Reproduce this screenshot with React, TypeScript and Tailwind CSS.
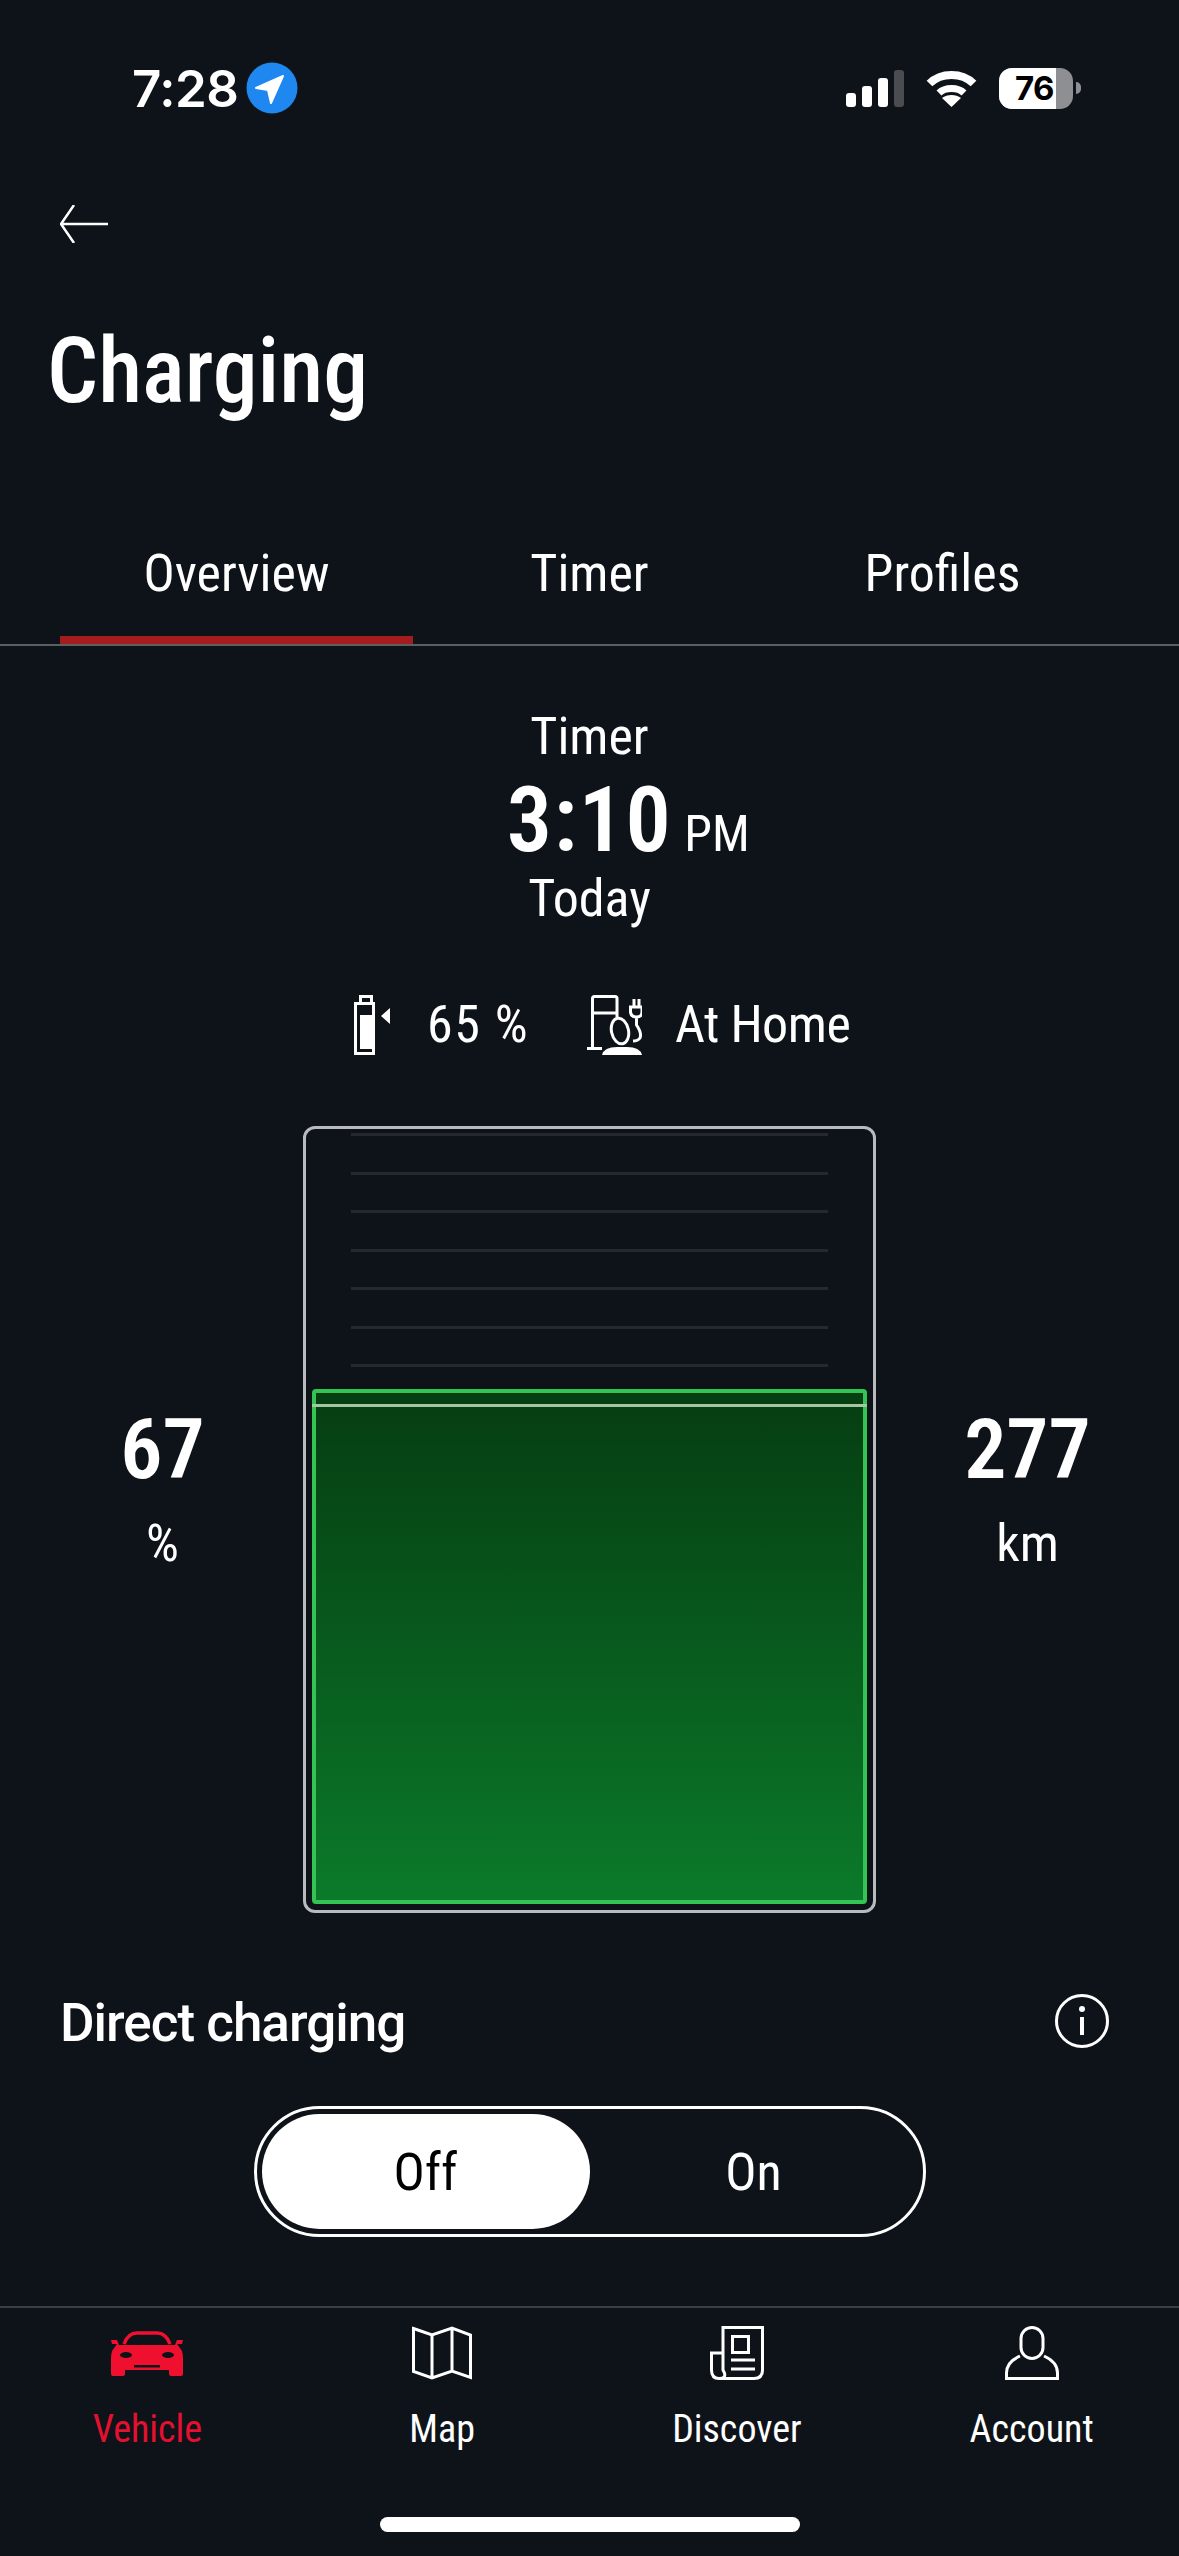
import React from "react";

const StatusBar = () => (
  <div className="h-[176px] shrink-0 flex items-center font-['Inter',sans-serif] text-white [font-stretch:100%]">
    <span className="ml-[132px] w-[114px] text-[51px] font-semibold leading-none tracking-[-0.5px]">7:28</span>
    <svg width="52" height="52" viewBox="0 0 52 52" className="shrink-0">
      <circle cx="26" cy="26" r="25.5" fill="#1e88f0" />
      <path d="M10 26 37 14 25 41 22 28Z" fill="#fff" stroke="#fff" strokeWidth="2" strokeLinejoin="round" />
    </svg>
    <div className="ml-[548px] flex items-end gap-[6px] h-[38px]">
      <div className="w-[10px] h-[14px] rounded-[3px] bg-white" />
      <div className="w-[10px] h-[21px] rounded-[3px] bg-white" />
      <div className="w-[10px] h-[29px] rounded-[3px] bg-white" />
      <div className="w-[10px] h-[37px] rounded-[3px] bg-[#4a4c50]" />
    </div>
    <svg width="51" height="38" viewBox="0 0 51 38" className="ml-[22px] shrink-0">
      <path d="M3.5 14.5C15 3 36 3 47.5 14.5" fill="none" stroke="#fff" strokeWidth="8" />
      <path d="M13 24C19 18 32 18 38 24" fill="none" stroke="#fff" strokeWidth="7" />
      <path d="M25.5 38 16 29C21 25 30 25 35 29Z" fill="#fff" />
    </svg>
    <div className="ml-[22px] w-[74px] h-[41px] rounded-[13px] overflow-hidden flex bg-[#8e8f92] shrink-0">
      <div className="w-[57px] bg-white text-black text-[33px] font-bold leading-[41px] text-right pr-[2px] tracking-[-0.5px]">76</div>
    </div>
    <div className="ml-[3px] w-[5px] h-[12px] rounded-r-full bg-[#8e8f92]" />
  </div>
);

const Tab = ({ label, active }: { label: string; active?: boolean }) => (
  <div className="relative w-[353px] h-[140px] flex items-center justify-center text-[52px]">
    {label}
    {active && <div className="absolute left-0 right-0 bottom-0 h-[8px] bg-[#a51c1f]" />}
  </div>
);

const BatteryIcon = () => (
  <svg width="36" height="60" viewBox="0 0 36 60" className="shrink-0">
    <path d="M1.5 8.5H19.5V58.5H1.5ZM6.5 8V1.5H17.5V8" fill="none" stroke="#fff" strokeWidth="3" />
    <rect x="6" y="20" width="12" height="34" fill="#fff" />
    <path d="M27 21 36 13V29Z" fill="#fff" />
  </svg>
);

const StationIcon = () => (
  <svg width="55" height="60" viewBox="0 0 55 60" className="shrink-0" fill="none" stroke="#fff" strokeWidth="3">
    <path d="M0 53.5H15M5.5 53V3.5Q5.5 1.5 7.5 1.5H28Q30 1.5 30 3.5V22M5 18H30" />
    <ellipse cx="33" cy="36" rx="8.5" ry="13" transform="rotate(-12 33 36)" />
    <path d="M15 60Q17 52 30 52H40Q53 52 55 60Z" fill="#fff" stroke="none" />
    <path d="M47 4V12M52 4V12M43.5 12H55V17Q55 22 49.5 22Q44 22 43.5 17ZM49.5 22V30Q55 38 53 43Q51 46 46 46" />
  </svg>
);

const CarIcon = () => (
  <svg width="72" height="45" viewBox="0 0 72 45" fill="#ef1030">
    <path d="M13 13Q17 2 26 2H46Q55 2 59 13" fill="none" stroke="#ef1030" strokeWidth="3.5" />
    <path d="M0 9H6L8 14H64L66 9H72L71 13H66L71 20Q72 24 72 27V43Q72 45 70 45H60Q58 45 58 43V39H14V43Q14 45 12 45H2Q0 45 0 43V27Q0 24 1 20L6 13H1Z" />
    <ellipse cx="15" cy="24" rx="6" ry="3" fill="#0e1319" />
    <ellipse cx="57" cy="24" rx="6" ry="3" fill="#0e1319" />
    <rect x="23" y="34" width="26" height="2.5" fill="#0e1319" />
  </svg>
);

const MapIcon = () => (
  <svg width="60" height="54" viewBox="0 0 60 54" fill="none" stroke="#fff" strokeWidth="3">
    <path d="M1.5 2.5 20 9 40 2 58.5 9V51.5L40 45 20 52 1.5 45.5ZM20 9V52M40 2V45" />
  </svg>
);

const DiscoverIcon = () => (
  <svg width="54" height="54" viewBox="0 0 54 54" fill="none" stroke="#fff" strokeWidth="3">
    <path d="M13 27V1.5H52.5V44Q52.5 52.5 44 52.5H9M13 27H1.5V44Q1.5 52.5 9 52.5Q18 52.5 13 44V27" />
    <rect x="22.5" y="10.5" width="16" height="16" />
    <path d="M21 34H45M21 43H45" />
  </svg>
);

const AccountIcon = () => (
  <svg width="54" height="54" viewBox="0 0 54 54" fill="none" stroke="#fff" strokeWidth="3">
    <rect x="16" y="1.5" width="22" height="31" rx="11" />
    <path d="M15 30Q1.5 36 1.5 47V52.5H52.5V47Q52.5 36 39 30" />
  </svg>
);

const NavItem = ({ label, icon, active }: { label: string; icon: React.ReactNode; active?: boolean }) => (
  <div className="flex flex-col items-center">
    <div className="h-[54px] flex items-center">{icon}</div>
    <div className={`mt-[24px] h-[50px] leading-[50px] text-[38px] ${active ? "text-[#e3112f]" : "text-white"}`}>
      {label}
    </div>
  </div>
);

export default function App() {
  return (
    <div className="w-[1179px] h-[2556px] overflow-hidden flex flex-col bg-[#0e1319] text-white font-['Roboto',sans-serif] [font-stretch:85%]">
      <StatusBar />

      <div className="h-[96px] shrink-0 flex items-center pl-[60px]">
        <svg width="48" height="38" viewBox="0 0 48 38" fill="none" stroke="#fff" strokeWidth="2.5">
          <path d="M48 19H1M14 0 1 19 14 38" />
        </svg>
      </div>

      <div className="h-[196px] shrink-0 flex items-center pt-[2px] pl-[47px] text-[90px] font-medium">Charging</div>

      <div className="mt-[36px] flex px-[60px]">
        <Tab label="Overview" active />
        <Tab label="Timer" />
        <Tab label="Profiles" />
      </div>
      <div className="h-[2px] shrink-0 bg-[#5b5e62]" />

      <div className="mt-[52px] h-[78px] leading-[78px] text-center text-[52px]">Timer</div>
      <div className="h-[90px] grid grid-cols-[1fr_auto_1fr] items-baseline">
        <div />
        <div className="text-[90px] font-semibold leading-[90px] tracking-[1.5px]">3:10</div>
        <div className="pl-[12px] text-[50px] leading-[90px]">PM</div>
      </div>
      <div className="h-[64px] leading-[66px] text-center text-[52px]">Today</div>

      <div className="mt-[65px] h-[60px] flex items-center pl-[354px] text-[52px]">
        <BatteryIcon />
        <span className="ml-[37px] w-[101px] whitespace-nowrap tracking-[1.5px]">65 %</span>
        <span className="ml-[59px]"><StationIcon /></span>
        <span className="ml-[33px] whitespace-nowrap tracking-[-0.5px]">At Home</span>
      </div>

      <div className="mt-[71px] h-[787px] shrink-0 grid grid-cols-[303px_573px_303px]">
        <div className="flex flex-col items-center justify-center pl-[22px] pb-[48px]">
          <div className="h-[96px] leading-[96px] text-[84px] font-semibold">67</div>
          <div className="h-[92px] leading-[92px] text-[52px]">%</div>
        </div>

        <div className="border-[3px] border-[#b8babd] rounded-[12px] flex flex-col">
          <div className="mt-[4px] h-[234px] px-[45px] flex flex-col justify-between">
            {[0, 1, 2, 3, 4, 5, 6].map((i) => (
              <div key={i} className="h-[3px] bg-[#25282d]" />
            ))}
          </div>
          <div className="mt-[22px] mx-[6px] mb-[6px] flex-1 flex flex-col border-[4px] border-[#34c454] rounded-[4px] bg-[#063f12]">
            <div className="mt-[11px] -mx-[4px] h-[3px] bg-[#a3c8a0]" />
            <div className="flex-1 bg-gradient-to-b from-[#053f12] to-[#0b7a2a]" />
          </div>
        </div>

        <div className="flex flex-col items-center justify-center pb-[48px]">
          <div className="h-[96px] leading-[96px] text-[84px] font-semibold">277</div>
          <div className="h-[92px] leading-[92px] text-[52px]">km</div>
        </div>
      </div>

      <div className="mt-[68px] h-[80px] shrink-0 flex items-center justify-between pl-[60px] pr-[70px]">
        <span className="mt-[5px] text-[53px] font-medium [font-stretch:88%] tracking-[-1px]">Direct charging</span>
        <svg width="54" height="54" viewBox="0 0 54 54" fill="none" stroke="#fff" strokeWidth="3">
          <circle cx="27" cy="27" r="25.5" />
          <path d="M27 23V41" strokeWidth="4" />
          <circle cx="27" cy="15" r="3" fill="#fff" stroke="none" />
        </svg>
      </div>

      <div className="mt-[45px] self-center w-[672px] h-[131px] shrink-0 rounded-full border-[3px] border-white px-[5px] py-[5px] grid grid-cols-2 text-[52px]">
        <div className="pt-[2px] rounded-full bg-white text-black flex items-center justify-center">Off</div>
        <div className="pt-[2px] flex items-center justify-center">On</div>
      </div>

      <div className="mt-[69px] h-[2px] shrink-0 bg-[#3a3d41]" />

      <div className="pt-[18px] grid grid-cols-4">
        <NavItem label="Vehicle" icon={<CarIcon />} active />
        <NavItem label="Map" icon={<MapIcon />} />
        <NavItem label="Discover" icon={<DiscoverIcon />} />
        <NavItem label="Account" icon={<AccountIcon />} />
      </div>

      <div className="mt-[63px] self-center w-[420px] h-[15px] shrink-0 rounded-full bg-white" />
    </div>
  );
}
